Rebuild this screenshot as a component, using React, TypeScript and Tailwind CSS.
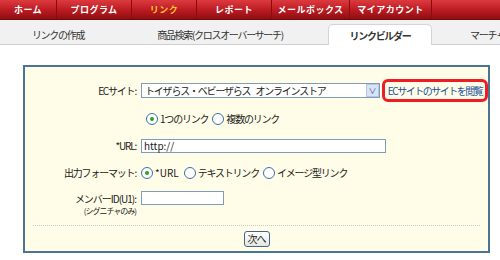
const navItems = [
  { label: "ホーム", w: "w-[57px]" },
  { label: "プログラム", w: "w-[75px]" },
  { label: "リンク", w: "w-[65px]", active: true },
  { label: "レポート", w: "w-[75px]" },
  { label: "メールボックス", w: "w-[78px]" },
  { label: "マイアカウント", w: "w-[82px]" },
];

const Radio = ({ checked }: { checked?: boolean }) => (
  <span className="mr-[2px] inline-flex h-[12px] w-[12px] shrink-0 items-center justify-center rounded-full border border-[#3d6fa6] bg-white">
    {checked && <span className="h-[4px] w-[4px] rounded-full bg-[#26a326]" />}
  </span>
);

const Label = ({ children }: { children: React.ReactNode }) => (
  <div className="w-[116px] shrink-0 whitespace-nowrap pr-[5px] text-right tracking-[-1.2px]">{children}</div>
);

export default function App() {
  return (
    <div
      className="h-[260px] w-[500px] overflow-hidden whitespace-nowrap bg-white text-[10px] text-[#222]"
      style={{ fontFamily: '"Noto Sans CJK JP", "Liberation Sans", sans-serif' }}
    >
      {/* top nav */}
      <div className="flex h-[20px] border-b border-[#6d0a0d] bg-gradient-to-b from-[#dd3a40] via-[#bd1c22] to-[#8f0d12]">
        {navItems.map((n) => (
          <div
            key={n.label}
            className={`${n.w} flex shrink-0 items-center justify-center border-r border-[#8a0c10] text-[9px] font-bold tracking-[0.5px] ${
              n.active ? "text-[#ffc233]" : "text-white"
            }`}
          >
            {n.label}
          </div>
        ))}
      </div>

      {/* sub tabs */}
      <div className="flex h-[25px] items-end border-b border-[#cfcfcf] bg-[#f1f1f1] text-[10px] tracking-[-1.3px] text-[#333]">
        <div className="flex h-[20px] w-[116px] shrink-0 items-center justify-center">リンクの作成</div>
        <div className="flex h-[20px] w-[208px] shrink-0 items-center justify-center">商品検索(クロスオーバーサーチ)</div>
        <div className="-mb-px ml-[4px] flex h-[21px] w-[104px] shrink-0 items-center justify-center rounded-t-[5px] border border-b-0 border-[#d5d5d5] bg-white font-bold">
          リンクビルダー
        </div>
        <div className="flex h-[20px] shrink-0 items-center pl-[38px]">マーチャ</div>
      </div>

      {/* panel */}
      <div className="ml-[23px] mt-[20px] h-[188px] w-[467px] border-2 border-[#4b7394] bg-[#fffde7] pt-[12px]">
        <div className="flex items-center">
          <Label>ECサイト:</Label>
          <div className="flex h-[15px] w-[239px] items-center justify-between border border-[#7f9db9] bg-white pl-[3px]">
            <span className="tracking-[-1.2px]">
              トイザらス・ベビーザらス<span className="inline-block w-[5px]" />オンラインストア
            </span>
            <span className="flex h-[13px] w-[13px] items-center justify-center border border-[#b5c6e3] bg-[#d7e3f7] text-[8px] text-[#4d6185]">
              ∨
            </span>
          </div>
          <div className="ml-[2px] flex h-[23px] w-[106px] items-center justify-center rounded-[6px] border-[3px] border-[#ee1c24] tracking-[-1.5px] text-[#1a4f9c]">
            ECサイトのサイトを閲覧
          </div>
        </div>

        <div className="mt-[9px] flex items-center pl-[121px] tracking-[-1.2px]">
          <Radio checked />
          <span className="mr-[4px]">1つのリンク</span>
          <Radio />
          <span>複数のリンク</span>
        </div>

        <div className="mt-[12px] flex items-center">
          <Label>*URL:</Label>
          <div className="flex h-[14px] w-[245px] items-center border border-[#7f9db9] bg-white pl-[2px]">http://</div>
        </div>

        <div className="mt-[12px] flex items-center">
          <Label>出力フォーマット:</Label>
          <Radio checked />
          <span className="mr-[5px]">*URL</span>
          <Radio />
          <span className="mr-[4px] tracking-[-1.2px]">テキストリンク</span>
          <Radio />
          <span className="tracking-[-1.2px]">イメージ型リンク</span>
        </div>

        <div className="mt-[11px] flex items-start">
          <div className="w-[116px] shrink-0 pr-[5px] text-right leading-[12px] tracking-[-1px]">
            <div className="pt-[2px]">メンバーID(U1):</div>
            <div className="text-[8px]">(シグニチャのみ)</div>
          </div>
          <div className="h-[14px] w-[83px] border border-[#7f9db9] bg-white" />
        </div>

        <div className="mx-[8px] mt-[8px] border-t border-dotted border-[#c8c8c8]" />

        <div className="mt-[5px] flex justify-center">
          <button className="h-[16px] rounded-[3px] border border-[#45648a] bg-gradient-to-b from-white to-[#e6e6e0] px-[3px] text-[10px] leading-[14px] tracking-[-1px]">
            次へ
          </button>
        </div>
      </div>
    </div>
  );
}
